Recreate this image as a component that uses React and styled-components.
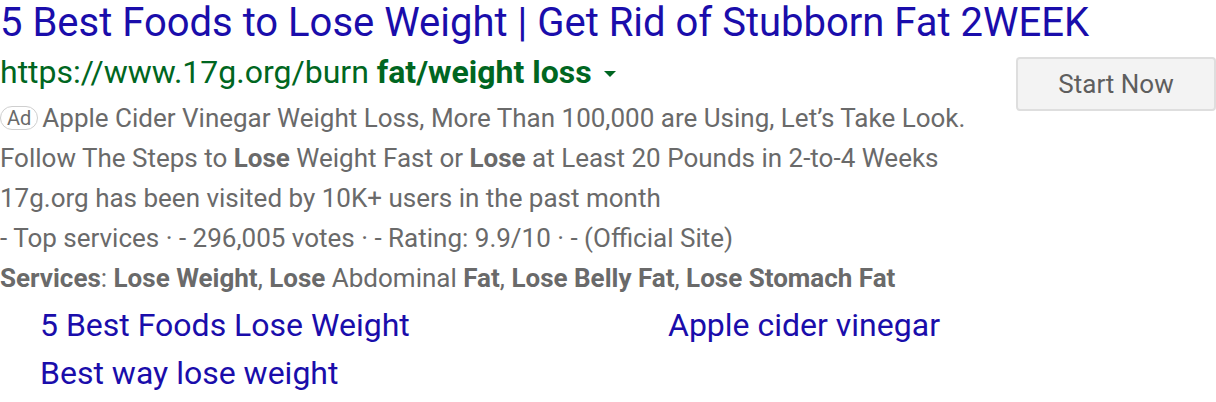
import React from "react";
import styled, { createGlobalStyle } from "styled-components";

const Global = createGlobalStyle`
  html, body { margin: 0; padding: 0; background: #fff; }
  body { font-family: Roboto, "Noto Sans", Arial, sans-serif; }
`;

const Ad = styled.div`
  width: 1216px;
  height: 402px;
  overflow: hidden;
  font-family: Roboto, Arial, sans-serif;
`;

const Title = styled.a`
  display: block;
  font-size: 40px;
  line-height: 46px;
  color: #1a0dab;
  text-decoration: none;
  white-space: nowrap;
`;

const Row = styled.div`
  display: flex;
  justify-content: space-between;
  align-items: flex-start;
`;

const Body = styled.div`
  display: flex;
  flex-direction: column;
`;

const UrlLine = styled.div`
  display: flex;
  align-items: center;
  font-size: 32px;
  line-height: 52px;
  height: 52px;
  color: #006621;
  white-space: nowrap;
`;

const Caret = styled.span`
  display: inline-block;
  margin-left: 12px;
  width: 0;
  height: 0;
  border-left: 6px solid transparent;
  border-right: 6px solid transparent;
  border-top: 6px solid #006621;
  margin-top: 4px;
`;

const Line = styled.div`
  font-size: 26px;
  line-height: 40px;
  color: #6a6a6a;
  white-space: nowrap;
  b { font-weight: 700; }
`;

const Badge = styled.span`
  display: inline-block;
  font-size: 20px;
  line-height: 22px;
  padding: 0 6px;
  border: 1px solid #cfcfcf;
  border-radius: 12px;
  color: #6a6a6a;
  margin-right: 4px;
  vertical-align: 2px;
`;

const Button = styled.button`
  margin-top: 11px;
  width: 200px;
  height: 54px;
  background: #f3f3f3;
  border: 2px solid #dedede;
  border-radius: 4px;
  font-family: Roboto, Arial, sans-serif;
  font-size: 26px;
  color: #5e5e5e;
  padding: 0;
`;

const Sitelinks = styled.div`
  display: grid;
  grid-template-columns: 628px 1fr;
  padding-left: 40px;
  margin-top: 3px;
`;

const Sitelink = styled.a`
  font-size: 32px;
  line-height: 48px;
  color: #1a0dab;
  text-decoration: none;
  white-space: nowrap;
`;

export default function App() {
  return (
    <>
      <Global />
      <Ad>
        <Title href="#">5 Best Foods to Lose Weight | Get Rid of Stubborn Fat 2WEEK</Title>
        <Row>
          <Body>
            <UrlLine>
              https://www.17g.org/burn&nbsp;<b>fat/weight loss</b>
              <Caret />
            </UrlLine>
            <Line>
              <Badge>Ad</Badge>Apple Cider Vinegar Weight Loss, More Than 100,000 are Using, Let’s Take Look.
            </Line>
            <Line>
              Follow The Steps to <b>Lose</b> Weight Fast or <b>Lose</b> at Least 20 Pounds in 2-to-4 Weeks
            </Line>
            <Line>17g.org has been visited by 10K+ users in the past month</Line>
            <Line>- Top services · - 296,005 votes · - Rating: 9.9/10 · - (Official Site)</Line>
            <Line>
              <b>Services</b>: <b>Lose Weight</b>, <b>Lose</b> Abdominal <b>Fat</b>, <b>Lose Belly Fat</b>, <b>Lose Stomach Fat</b>
            </Line>
          </Body>
          <Button>Start Now</Button>
        </Row>
        <Sitelinks>
          <Sitelink href="#">5 Best Foods Lose Weight</Sitelink>
          <Sitelink href="#">Apple cider vinegar</Sitelink>
          <Sitelink href="#">Best way lose weight</Sitelink>
        </Sitelinks>
      </Ad>
    </>
  );
}
